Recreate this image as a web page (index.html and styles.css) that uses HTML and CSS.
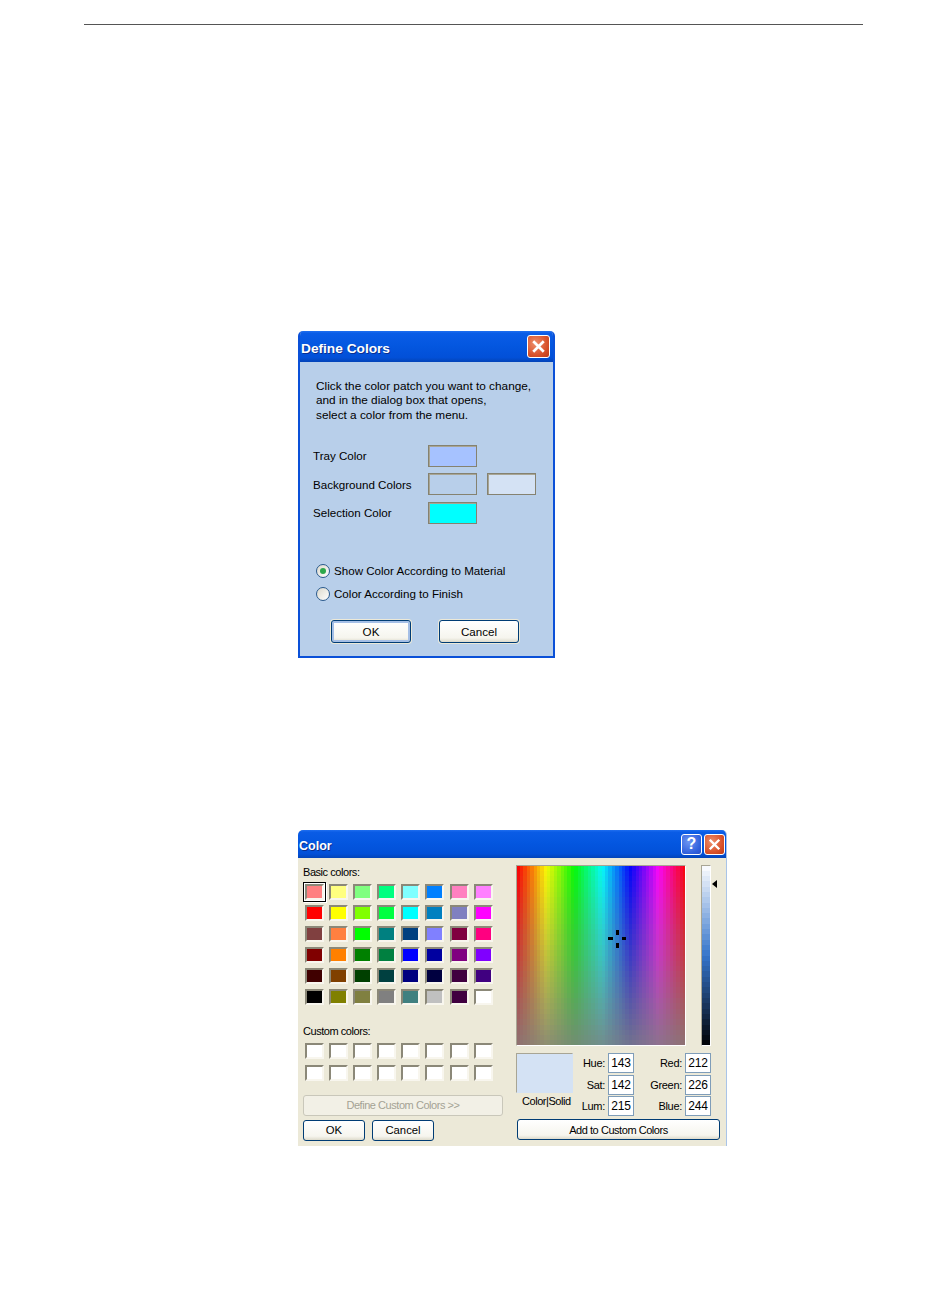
FILE: index.html

```html
<!DOCTYPE html>
<html lang="en">
<head>
  <meta charset="UTF-8" />
  <title>Define Colors</title>
  <link rel="stylesheet" href="styles.css">
</head>
<body>
  <div class="rule"></div>

  <div class="dialog define">
    <div class="titlebar">
      <span class="title">Define Colors</span>
      <span class="winbtn close"><svg viewBox="0 0 20 20"><path d="M5 5L15 15M15 5L5 15" /></svg></span>
    </div>
    <div class="define-body">
      <p class="intro">Click the color patch you want to change,<br>and in the dialog box that opens,<br>select a color from the menu.</p>
      <div class="patches">
        <span>Tray Color</span><i class="patch tray"></i><b></b>
        <span>Background Colors</span><i class="patch bg1"></i><i class="patch bg2"></i>
        <span>Selection Color</span><i class="patch sel"></i><b></b>
      </div>
      <div class="radios">
        <label><i class="radio on"></i>Show Color According to Material</label>
        <label><i class="radio"></i>Color According to Finish</label>
      </div>
      <div class="define-btns">
        <button class="btn default">OK</button>
        <button class="btn">Cancel</button>
      </div>
    </div>
  </div>

  <div class="dialog color">
    <div class="titlebar">
      <span class="title">Color</span>
      <span class="winbtn help">?</span>
      <span class="winbtn close"><svg viewBox="0 0 20 20"><path d="M5 5L15 15M15 5L5 15" /></svg></span>
    </div>
    <div class="color-body">
      <div class="left">
        <div class="cap">Basic colors:</div>
        <div class="swatches" id="basic"></div>
        <div class="cap custom-cap">Custom colors:</div>
        <div class="swatches" id="custom"></div>
        <button class="btn wide" disabled>Define Custom Colors &gt;&gt;</button>
        <div class="left-btns">
          <button class="btn">OK</button>
          <button class="btn">Cancel</button>
        </div>
      </div>
      <div class="right">
        <div class="picker">
          <div class="spectrum">
            <canvas id="spectrum" width="168" height="179"></canvas>
            <span class="cross"></span>
          </div>
          <canvas class="lum" id="lum" width="8" height="179"></canvas>
          <span class="arrow"></span>
        </div>
        <div class="readout">
          <div class="solid-wrap">
            <div class="solid"></div>
            <div class="solid-cap">Color|Solid</div>
          </div>
          <div class="fields hsl">
            <label>Hue:</label><span class="field">143</span>
            <label>Sat:</label><span class="field">142</span>
            <label>Lum:</label><span class="field">215</span>
          </div>
          <div class="fields rgb">
            <label>Red:</label><span class="field">212</span>
            <label>Green:</label><span class="field">226</span>
            <label>Blue:</label><span class="field">244</span>
          </div>
        </div>
        <button class="btn add">Add to Custom Colors</button>
      </div>
    </div>
  </div>

  <script src="app.js"></script>
</body>
</html>
```

FILE: styles.css

```css
body {
  margin: 0;
  background: #fff;
  color: #000;
  font-family: "Liberation Sans", Arial, sans-serif;
  font-size: 12px;
}
.rule {
  width: 779px;
  height: 1px;
  margin: 24px 0 0 84px;
  background: #555;
}
.dialog {
  box-sizing: border-box;
  margin-left: 298px;
  border-radius: 5px 5px 0 0;
  overflow: hidden;
}
.define {
  width: 257px;
  height: 327px;
  margin-top: 306px;
  background: #b8cfea;
  border: solid #0a50d8;
  border-width: 0 2px 2px;
}
.color {
  width: 429px;
  height: 316px;
  margin-top: 172px;
  background: #ece9d8;
  border-right: 1px solid #a9c4e8;
}
.titlebar {
  display: flex;
  align-items: center;
  gap: 2px;
  height: 30px;
  background: linear-gradient(#1f6ff0 0, #0a5ce6 8%, #0457e0 45%, #0250d8 85%, #0344b8 100%);
  color: #fff;
}
.define .titlebar {
  margin: 0 -2px;
  padding: 0 5px 0 3px;
  height: 31px;
}
.color .titlebar {
  height: 28px;
  padding: 0 1px;
}
.title {
  flex: 1;
  padding-top: 3px;
  font-size: 13.7px;
  font-weight: bold;
  text-shadow: 1px 1px 0 #0a2f90;
}
.color .title {
  font-size: 12.5px;
}
.winbtn {
  box-sizing: border-box;
  display: flex;
  align-items: center;
  justify-content: center;
  width: 21px;
  height: 21px;
  border: 1px solid #fff;
  border-radius: 3px;
}
.winbtn svg {
  width: 100%;
  height: 100%;
}
.winbtn path {
  fill: none;
  stroke: #fff;
  stroke-width: 2.6;
}
.close {
  background: radial-gradient(circle at 35% 35%, #ee8f6c, #d9532c 60%, #bf3a15);
}
.define .close {
  width: 23px;
  height: 23px;
}
.help {
  background: radial-gradient(circle at 35% 35%, #6d96f2, #2f5fdc 70%, #2a50c8);
  font-size: 16px;
  font-weight: bold;
}

/* define colors dialog */
.define-body {
  font-size: 11.6px;
}
.intro {
  margin: 0;
  padding: 17px 0 0 16px;
  font-size: 11.8px;
  line-height: 14.3px;
}
.patches {
  display: grid;
  grid-template-columns: 105px 49px 49px;
  grid-auto-rows: 22px;
  column-gap: 10px;
  row-gap: 6.5px;
  align-items: center;
  margin-top: 23px;
  padding-left: 13px;
}
.patch {
  box-sizing: border-box;
  height: 22px;
  border: 1px solid #858270;
  box-shadow: inset 1px 1px 0 #a8a594;
}
.tray { background: #a6c2ff; }
.bg1 { background: #b8cfea; }
.bg2 { background: #d4e2f4; }
.sel { background: #00ffff; }
.radios {
  display: flex;
  flex-direction: column;
  gap: 9px;
  margin-top: 40px;
  padding-left: 16px;
}
.radios label {
  display: flex;
  align-items: center;
  gap: 4px;
  height: 14px;
}
.radio {
  box-sizing: border-box;
  display: flex;
  align-items: center;
  justify-content: center;
  width: 14px;
  height: 14px;
  border: 1px solid #2a5a8c;
  border-radius: 50%;
  background: linear-gradient(135deg, #dcd9cc, #fff);
}
.radio.on::after {
  content: "";
  width: 6px;
  height: 6px;
  border-radius: 50%;
  background: #2da84a;
}
.define-btns {
  display: flex;
  gap: 28px;
  margin-top: 19px;
  padding-left: 31px;
}
.define-btns .btn {
  width: 80px;
  height: 23px;
}
.btn {
  box-sizing: border-box;
  padding: 0;
  border: 1px solid #003c74;
  border-radius: 3px;
  background: linear-gradient(#fff, #f6f5ee 80%, #dedbcc);
  box-shadow: 0 0 0 1px #ece9d8;
  color: #000;
  font: inherit;
}
.btn.default {
  box-shadow: 0 0 0 1px #ece9d8, inset 0 0 0 2px #a5bfe6;
}

/* color dialog */
.color-body {
  display: flex;
}
.left {
  width: 205px;
  padding: 7px 0 0 5px;
  box-sizing: border-box;
  flex: none;
}
.cap {
  height: 14px;
  line-height: 14px;
  font-size: 11px;
  letter-spacing: -0.45px;
}
.custom-cap {
  margin-top: 18.5px;
}
.swatches {
  display: grid;
  grid-template-columns: repeat(8, 19px);
  grid-auto-rows: 16px;
  column-gap: 5.1px;
  row-gap: 5px;
  margin: 5px 0 0 2px;
}
.custom-cap + .swatches {
  margin-top: 5px;
  row-gap: 6px;
}
.swatch {
  box-sizing: border-box;
  border: 2px solid;
  border-color: #8b8878 #f8f6ee #f8f6ee #8b8878;
}
.swatch.current {
  outline: 1px solid #000;
  outline-offset: 1px;
  box-shadow: 1px 1px 0 2px #fff;
}
.btn.wide {
  display: block;
  width: 200px;
  height: 21px;
  margin-top: 14px;
  border-color: #c9c7ba;
  background: #f2f0e6;
  color: #a4a294;
  font-size: 11px;
  letter-spacing: -0.45px;
}
.left-btns {
  display: flex;
  gap: 7px;
  margin-top: 4px;
  font-size: 11.3px;
}
.left-btns .btn {
  width: 62px;
  height: 21px;
}
.right {
  flex: none;
  width: 206px;
  margin-left: 13px;
  padding-top: 7px;
}
.picker {
  display: flex;
  align-items: flex-start;
  gap: 15px;
  position: relative;
}
.spectrum {
  position: relative;
  width: 168px;
  height: 179px;
  border: 1px solid;
  border-color: #a8a594 #fff #fff #a8a594;
}
.spectrum canvas,
.lum {
  display: block;
}
.lum {
  border: 1px solid;
  border-color: #a8a594 #fff #fff #a8a594;
}
.cross {
  position: absolute;
  left: 91px;
  top: 64px;
  width: 18px;
  height: 18px;
  background:
    linear-gradient(#000, #000) 8px 0 / 3px 5px no-repeat,
    linear-gradient(#000, #000) 8px 13px / 3px 5px no-repeat,
    linear-gradient(#000, #000) 0 7px / 5px 3px no-repeat,
    linear-gradient(#000, #000) 14px 7px / 5px 3px no-repeat;
}
.arrow {
  position: absolute;
  left: 196px;
  top: 15px;
  border: solid transparent;
  border-width: 4px 5px 4px 0;
  border-right-color: #000;
}
.readout {
  display: flex;
  margin-top: 7px;
}
.solid-wrap {
  width: 58px;
  flex: none;
}
.solid {
  box-sizing: border-box;
  height: 40px;
  width: 57px;
  border: 1px solid;
  border-color: #a8a594 #d4e2f4 #d4e2f4 #a8a594;
  background: #d4e2f4;
}
.solid-cap {
  margin-top: 1px;
  padding-left: 6px;
  font-size: 11px;
  letter-spacing: -0.45px;
  line-height: 14px;
  white-space: nowrap;
}
.fields {
  display: grid;
  grid-auto-rows: 20px;
  row-gap: 1.5px;
  align-items: center;
  column-gap: 3px;
  font-size: 11px;
  letter-spacing: -0.3px;
}
.fields label {
  text-align: right;
}
.hsl {
  grid-template-columns: 31px 26px;
}
.rgb {
  grid-template-columns: 45px 26px;
  margin-left: 3px;
}
.field {
  box-sizing: border-box;
  height: 20px;
  border: 1px solid #7f9db9;
  background: #fff;
  font-size: 12px;
  letter-spacing: -0.2px;
  line-height: 18px;
  text-align: center;
}
.btn.add {
  display: block;
  width: 203px;
  height: 21px;
  margin-top: 3px;
  margin-left: 1px;
  font-size: 11px;
  letter-spacing: -0.45px;
}
```

FILE: app.js

```js
var basic = [
  "#ff8080", "#ffff80", "#80ff80", "#00ff80", "#80ffff", "#0080ff", "#ff80c0", "#ff80ff",
  "#ff0000", "#ffff00", "#80ff00", "#00ff40", "#00ffff", "#0080c0", "#8080c0", "#ff00ff",
  "#804040", "#ff8040", "#00ff00", "#008080", "#004080", "#8080ff", "#800040", "#ff0080",
  "#800000", "#ff8000", "#008000", "#008040", "#0000ff", "#0000a0", "#800080", "#8000ff",
  "#400000", "#804000", "#004000", "#004040", "#000080", "#000040", "#400040", "#400080",
  "#000000", "#808000", "#808040", "#808080", "#408080", "#c0c0c0", "#400040", "#ffffff"
];

function addSwatch(parent, color, current) {
  var el = document.createElement("i");
  el.className = current ? "swatch current" : "swatch";
  el.style.background = color;
  parent.appendChild(el);
}

var basicEl = document.getElementById("basic");
basic.forEach(function (c, i) { addSwatch(basicEl, c, i === 0); });

var customEl = document.getElementById("custom");
for (var n = 0; n < 16; n++) addSwatch(customEl, "#fff", false);

// the picker is drawn in coarse blocks, as the old dialog did
var ctx = document.getElementById("spectrum").getContext("2d");
var bw = 3.4, bh = 5.3;
for (var x = 0; x < 168; x += bw) {
  for (var y = 0; y < 179; y += bh) {
    var s = 95 - (y / 179) * 85;
    ctx.fillStyle = "hsl(" + (x / 168) * 360 + "," + s + "%,50%)";
    ctx.fillRect(Math.floor(x), Math.floor(y), Math.ceil(bw), Math.ceil(bh));
  }
}

var lum = document.getElementById("lum").getContext("2d");
for (var ly = 0; ly < 179; ly += bh) {
  var l = 98 - (ly / 179) * 98;
  lum.fillStyle = "hsl(214.5,59%," + l + "%)";
  lum.fillRect(0, Math.floor(ly), 8, Math.ceil(bh));
}
```
